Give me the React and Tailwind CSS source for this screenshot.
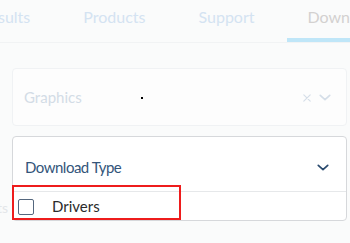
import React from 'react';

const Chevron = ({ className }) => (
  <svg viewBox="0 0 14 8" className={className} fill="none" stroke="currentColor" strokeWidth="2" strokeLinecap="round" strokeLinejoin="round">
    <path d="M1.5 1.5 L7 6.5 L12.5 1.5" />
  </svg>
);

const Cross = ({ className }) => (
  <svg viewBox="0 0 10 10" className={className} fill="none" stroke="currentColor" strokeWidth="1.4" strokeLinecap="round">
    <path d="M1 1 L9 9 M9 1 L1 9" />
  </svg>
);

const tabs = [
  { label: 'Results', active: false },
  { label: 'Products', active: false },
  { label: 'Support', active: false },
  { label: 'Downloads', active: true },
];

export default function App() {
  return (
    <div className="w-[350px] h-[243px] overflow-hidden bg-[#fafbfb] font-['Lato',sans-serif]">
      {/* tab strip */}
      <div className="flex h-[43px] border-b border-[#f1f3f4] ml-[-40px] gap-[13px]">
        {tabs.map((tab) => (
          <div
            key={tab.label}
            className={`px-[20px] flex items-center pb-[8px] text-[16px] whitespace-nowrap ${
              tab.active ? 'text-[#d3d1d0] border-b-[4px] border-[#bfe6f8] pt-[4px] pb-[4px]' : 'text-[#d4e3f2]'
            }`}
          >
            {tab.label}
          </div>
        ))}
      </div>

      <div className="flex mt-[25px]">
        <div className="w-[12px] flex flex-col">
          <div className="h-[58px]" />
          <div className="h-[66px]" />
          <div className="pt-[9px] text-[14px] leading-none text-[#e3e6e9] ml-[-3px]">ts</div>
        </div>

        <div className="w-[335px] flex flex-col gap-[10px]">
          {/* Graphics select (faded) */}
          <div className="h-[58px] rounded-[4px] border border-[#f0f2f4] bg-[#fdfdfd] flex items-center pl-[11px] pr-[15px]">
            <span className="text-[15px] text-[#d3dce6]">Graphics</span>
            <span className="ml-[59px] mt-[1px] w-[2px] h-[2px] bg-black" />
            <div className="ml-auto flex items-center gap-[8px] text-[#d5dee8] pt-[1px]">
              <Cross className="w-[8px] h-[8px]" />
              <Chevron className="w-[12px] h-[7px]" />
            </div>
          </div>

          {/* Download Type dropdown */}
          <div className="relative rounded-[4px] border border-[#d6d8db] bg-white">
            <div className="h-[55px] flex items-center pl-[12px] pr-[17px] pt-[6px] border-b border-[#e6e8ea]">
              <span className="text-[15px] tracking-[-0.5px] text-[#33557a]">Download Type</span>
              <Chevron className="ml-auto w-[12px] h-[7px] text-[#2a4a6e]" />
            </div>
            <div className="h-[28px] flex items-center pl-[5px] pt-[1px]">
              <span className="w-[16px] h-[16px] rounded-[2px] border border-[#54677e] bg-white" />
              <span className="ml-[18px] text-[15px] text-[#2b2b2b]">Drivers</span>
            </div>
            <div className="absolute left-[-1px] top-[48px] w-[169px] h-[35px] border-2 border-[#ee1c1c]" />
          </div>
        </div>
      </div>
    </div>
  );
}
